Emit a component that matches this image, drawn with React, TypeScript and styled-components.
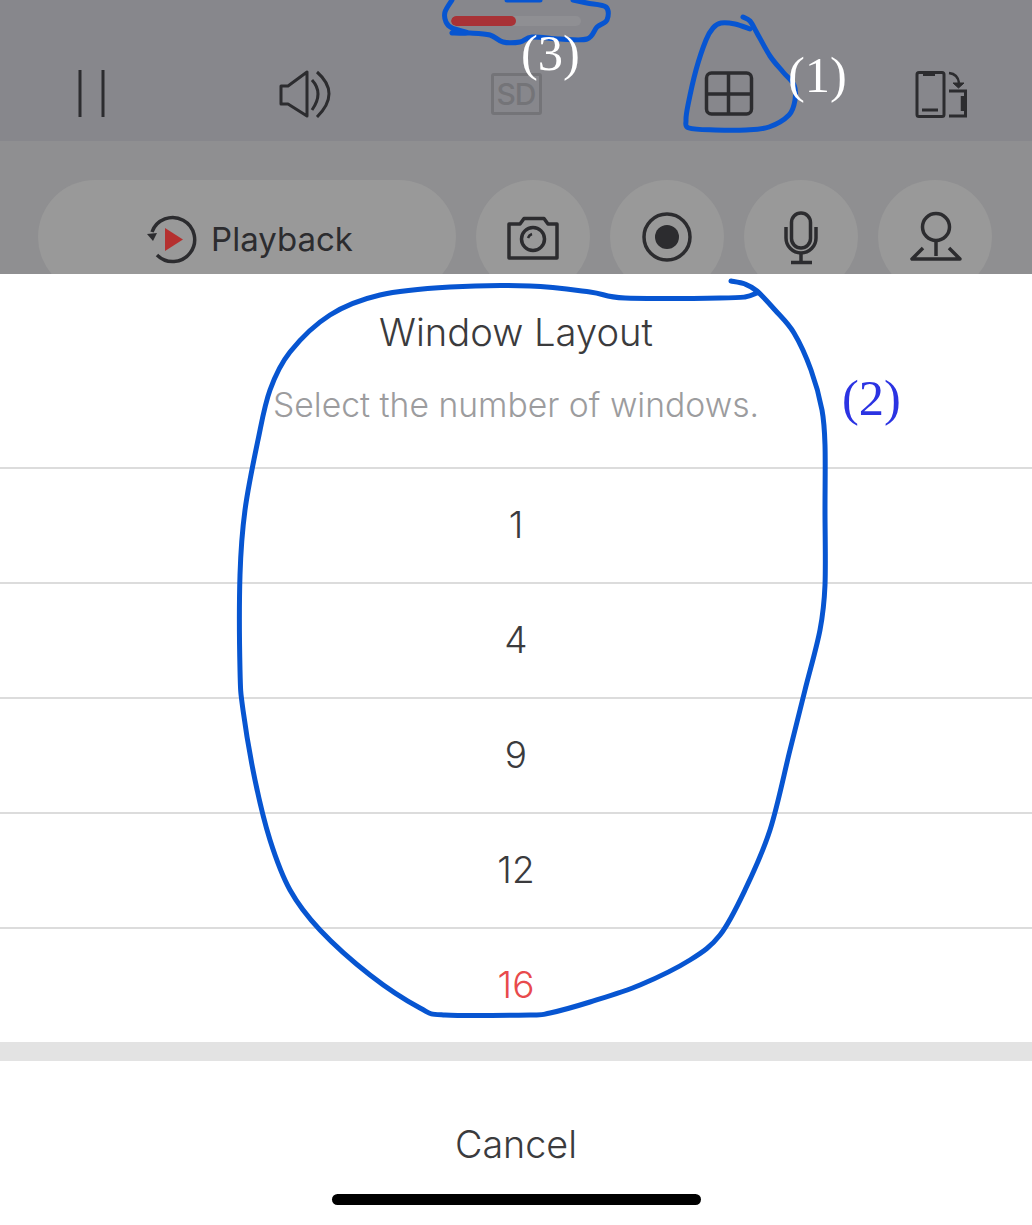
import React from "react";
import styled, { createGlobalStyle } from "styled-components";

const GlobalStyle = createGlobalStyle`
  html, body {
    margin: 0;
    padding: 0;
    background: #fff;
    overflow: hidden;
  }
  * {
    box-sizing: border-box;
  }
`;

const Page = styled.div`
  position: relative;
  width: 1032px;
  height: 1225px;
  overflow: hidden;
  display: flex;
  flex-direction: column;
  font-family: Inter, "Liberation Sans", sans-serif;
  font-weight: 300;
  color: #3b3b3d;
`;

const TopBar = styled.div`
  height: 141px;
  background: #87878c;
  padding-top: 16px;
  display: flex;
  flex-direction: column;
  align-items: center;
`;

const ProgressTrack = styled.div`
  width: 130px;
  height: 10px;
  border-radius: 5px;
  background: #8f8f93;
  overflow: hidden;
`;

const ProgressFill = styled.div`
  height: 100%;
  background: #a83236;
  border-radius: 5px;
`;

const ControlRow = styled.div`
  width: 100%;
  margin-top: 44px;
  padding: 0 60px;
  display: flex;
  justify-content: space-between;
`;

const ControlIcon = styled.div`
  width: 64px;
  height: 48px;
  display: flex;
  align-items: center;
  justify-content: center;
  svg {
    display: block;
    fill: none;
    stroke: #2c2c2f;
    stroke-width: 3;
  }
`;

const SdBadge = styled.div`
  width: 51px;
  height: 42px;
  border: 3px solid #747478;
  border-radius: 3px;
  display: flex;
  align-items: center;
  justify-content: center;
  font-family: Inter, "Liberation Sans", sans-serif;
  font-weight: 500;
  font-size: 30px;
  letter-spacing: -1px;
  color: #747478;
`;

const ActionBar = styled.div`
  height: 133px;
  background: #8f8f91;
  padding: 39px 38px 0 38px;
  display: flex;
  gap: 20px;
  overflow: hidden;
`;

const PlaybackPill = styled.div`
  flex: 0 0 418px;
  height: 114px;
  padding: 3px 0 0 5px;
  border-radius: 57px;
  background: #999999;
  display: flex;
  align-items: center;
  justify-content: center;
  gap: 13px;
  font-size: 33px;
  font-weight: 400;
  color: #2c2c2f;
  svg {
    display: block;
  }
`;

const RoundAction = styled.div`
  flex: 0 0 114px;
  height: 114px;
  border-radius: 50%;
  background: #999999;
  display: flex;
  align-items: center;
  justify-content: center;
  svg {
    display: block;
    fill: none;
    stroke: #2c2c2f;
    stroke-width: 3.5;
  }
`;

const Sheet = styled.div`
  flex: 1;
  background: #fff;
  display: flex;
  flex-direction: column;
`;

const SheetHeader = styled.div`
  height: 193px;
  padding-top: 36px;
  text-align: center;
`;

const SheetTitle = styled.div`
  font-size: 38.2px;
  line-height: 44px;
  color: #3b3b3d;
`;

const SheetHint = styled.div`
  margin-top: 29px;
  font-size: 33.7px;
  line-height: 44px;
  color: #9c9c9e;
`;

const OptionRow = styled.div<{ $active?: boolean }>`
  height: 115px;
  padding-bottom: 2px;
  border-top: 2px solid #dcdcdc;
  display: flex;
  align-items: center;
  justify-content: center;
  font-size: 37px;
  color: ${(p) => (p.$active ? "#e84a4c" : "#3b3b3d")};
`;

const SheetGap = styled.div`
  height: 19px;
  background: #e3e3e3;
`;

const CancelArea = styled.div`
  flex: 1;
  display: flex;
  flex-direction: column;
  align-items: center;
  padding-top: 60px;
`;

const CancelLabel = styled.div`
  font-size: 37.7px;
  line-height: 46px;
  color: #3b3b3d;
`;

const HomeBar = styled.div`
  margin-top: 27px;
  width: 369px;
  height: 11px;
  border-radius: 6px;
  background: #000;
`;

const Scribbles = styled.svg`
  position: absolute;
  left: 0;
  top: 0;
  pointer-events: none;
  fill: none;
  stroke: #0755d1;
  stroke-width: 5;
  stroke-linecap: round;
  stroke-linejoin: round;
`;

const Note = styled.div<{ $x: number; $y: number; $blue?: boolean }>`
  position: absolute;
  left: ${(p) => p.$x}px;
  top: ${(p) => p.$y}px;
  font-family: "Liberation Serif", "Times New Roman", serif;
  font-weight: 400;
  font-size: 50.5px;
  line-height: 60px;
  color: ${(p) => (p.$blue ? "#2b33e2" : "#fff")};
`;

type Pt = [number, number];

// smooth the hand-drawn outlines (catmull-rom to bezier)
const smooth = (pts: Pt[]) => {
  let d = `M${pts[0][0]} ${pts[0][1]}`;
  for (let i = 0; i < pts.length - 1; i++) {
    const p0 = pts[i - 1] || pts[i];
    const p1 = pts[i];
    const p2 = pts[i + 1];
    const p3 = pts[i + 2] || p2;
    const c1x = p1[0] + (p2[0] - p0[0]) / 6;
    const c1y = p1[1] + (p2[1] - p0[1]) / 6;
    const c2x = p2[0] - (p3[0] - p1[0]) / 6;
    const c2y = p2[1] - (p3[1] - p1[1]) / 6;
    d += ` C${c1x} ${c1y} ${c2x} ${c2y} ${p2[0]} ${p2[1]}`;
  }
  return d;
};

const progressLoop: Pt[] = [
  [452, 0], [445, 12], [446, 22], [452, 28], [468, 33], [452, 33], [470, 33],
  [490, 35], [503, 42], [520, 42], [532, 37], [560, 39], [587, 39], [597, 27],
  [607, 20], [606, 7], [587, 3], [573, 0],
];

const gridLoop: Pt[] = [
  [743, 17], [750, 21], [757, 33], [770, 56], [783, 72], [794, 85], [795, 100],
  [789, 115], [769, 127], [746, 130], [715, 130], [689, 128], [686, 120],
  [688, 105], [696, 70], [706, 40], [713, 28], [721, 23], [735, 24], [750, 29],
];

const sheetLoop: Pt[] = [
  [731, 281], [745, 284], [757, 291], [775, 310], [794, 333], [811, 370],
  [822, 410], [825, 445], [825, 510], [825, 585], [820, 630], [805, 690], [790, 750],
  [770, 830], [745, 890], [720, 935], [690, 960], [640, 985], [590, 1002],
  [550, 1013], [530, 1015], [445, 1015], [420, 1008], [370, 975], [320, 930],
  [290, 890], [270, 840], [255, 780], [243, 710], [240, 670], [240, 575],
  [245, 510], [258, 440], [270, 390], [290, 352], [330, 315], [380, 295],
  [450, 287], [530, 286], [590, 292], [625, 298], [720, 298], [745, 297], [757, 293],
];

const PauseIcon = () => (
  <svg width="64" height="48">
    <path d="M20 0V47M43 0V47" />
  </svg>
);

const SpeakerIcon = () => (
  <svg width="64" height="48">
    <path d="M9 16H16L35 2V46L16 34H9Z" strokeLinejoin="round" />
    <path d="M40 10Q52 23 40 40M45 2Q69 23 45 47" />
  </svg>
);

const GridIcon = () => (
  <svg width="64" height="48">
    <rect x="10.5" y="3" width="45" height="41" rx="5" strokeWidth="3.5" />
    <path d="M10 24H56M32.5 3V44" strokeWidth="3.5" />
  </svg>
);

const RotateIcon = () => (
  <svg width="64" height="48">
    <rect x="9" y="2.5" width="27" height="44" rx="2" />
    <path d="M15 4.5H27M14 40H30" strokeWidth="3" />
    <path d="M41 21H57.5V46H41" />
    <path d="M55 26V41" strokeWidth="4.5" />
    <path d="M41 3Q50 4 51 13" strokeWidth="2.5" />
    <path d="M45 13H56L50.5 18Z" fill="#2c2c2f" strokeWidth="1" />
  </svg>
);

const PlaybackIcon = () => (
  <svg width="52" height="52" fill="none">
    <path d="M6 19A22 22 0 1 1 11 42" stroke="#2c2c2f" strokeWidth="3.5" />
    <path d="M1 21L11 20L7 28Z" fill="#2c2c2f" />
    <path d="M19 15L37 26.5L19 38Z" fill="#b5302f" />
  </svg>
);

const CameraIcon = () => (
  <svg width="64" height="64">
    <path d="M8 19H19L23 13.5H43L47 19H56V53H8Z" strokeLinejoin="round" />
    <circle cx="32" cy="34" r="11.5" />
    <path d="M27 33Q28 30 31 29" strokeWidth="2.5" />
  </svg>
);

const RecordIcon = () => (
  <svg width="64" height="64">
    <circle cx="32" cy="32" r="23" />
    <circle cx="32" cy="32" r="12" fill="#2c2c2f" stroke="none" />
  </svg>
);

const MicIcon = () => (
  <svg width="64" height="64">
    <rect x="22.5" y="8" width="19" height="35" rx="9.5" />
    <path d="M17 22V33A15 15 0 0 0 47 33V22M32 48V57M22 57.5H43" />
  </svg>
);

const PinIcon = () => (
  <svg width="64" height="64">
    <circle cx="33" cy="22" r="13.5" />
    <path d="M33 36V51M20 43L9 54H57L46 43" strokeLinejoin="round" />
  </svg>
);

const OPTIONS = ["1", "4", "9", "12", "16"];
const SELECTED = "16";

export default function App() {
  return (
    <Page>
      <GlobalStyle />
      <TopBar>
        <ProgressTrack>
          <ProgressFill style={{ width: "50%" }} />
        </ProgressTrack>
        <ControlRow>
          <ControlIcon>
            <PauseIcon />
          </ControlIcon>
          <ControlIcon>
            <SpeakerIcon />
          </ControlIcon>
          <ControlIcon>
            <SdBadge>SD</SdBadge>
          </ControlIcon>
          <ControlIcon>
            <GridIcon />
          </ControlIcon>
          <ControlIcon>
            <RotateIcon />
          </ControlIcon>
        </ControlRow>
      </TopBar>
      <ActionBar>
        <PlaybackPill>
          <PlaybackIcon />
          Playback
        </PlaybackPill>
        <RoundAction>
          <CameraIcon />
        </RoundAction>
        <RoundAction>
          <RecordIcon />
        </RoundAction>
        <RoundAction>
          <MicIcon />
        </RoundAction>
        <RoundAction>
          <PinIcon />
        </RoundAction>
      </ActionBar>
      <Sheet>
        <SheetHeader>
          <SheetTitle>Window Layout</SheetTitle>
          <SheetHint>Select the number of windows.</SheetHint>
        </SheetHeader>
        {OPTIONS.map((n) => (
          <OptionRow key={n} $active={n === SELECTED}>
            {n}
          </OptionRow>
        ))}
        <SheetGap />
        <CancelArea>
          <CancelLabel>Cancel</CancelLabel>
          <HomeBar />
        </CancelArea>
      </Sheet>

      {/* hand annotations on top of the screenshot */}
      <Scribbles width="1032" height="1225">
        <path d={smooth(progressLoop)} />
        <path d="M507 0H540" />
        <path d={smooth(gridLoop)} />
        <path d={smooth(sheetLoop)} />
      </Scribbles>
      <Note $x={521} $y={23}>(3)</Note>
      <Note $x={788} $y={45}>(1)</Note>
      <Note $x={842} $y={368} $blue>(2)</Note>
    </Page>
  );
}
